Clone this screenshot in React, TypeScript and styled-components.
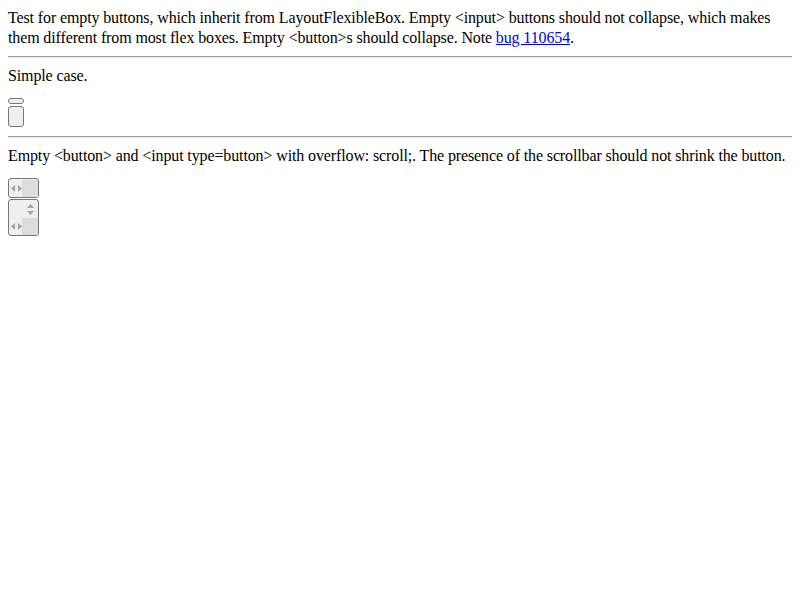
import React from 'react'
import styled, { createGlobalStyle } from 'styled-components'

const GlobalStyle = createGlobalStyle`
  body {
    margin: 8px;
    font-family: "Liberation Serif", "Times New Roman", serif;
    font-size: 16px;
    line-height: 20px;
    letter-spacing: -0.125px;
    color: #000;
    background: #fff;
  }
`

const Intro = styled.div``

const BugLink = styled.a`
  color: #0000ee;
  text-decoration: underline;
`

const Rule = styled.hr<{ $top?: number }>`
  margin: ${p => p.$top ?? 8}px 0 8px;
  height: 0;
  border: 0;
  border-top: 1px solid #9a9a9a;
  border-bottom: 1px solid #eeeeee;
`

const Para = styled.p`
  margin: 0;
`

const Case = styled.div`
  margin-top: 12px;
  display: flex;
  flex-direction: column;
  align-items: flex-start;
`

const FlatButton = styled.button<{ $h: number; $gap?: number }>`
  display: block;
  box-sizing: border-box;
  width: 16px;
  height: ${p => p.$h}px;
  margin: ${p => p.$gap ?? 0}px 0 0;
  padding: 0;
  border: 1px solid #767676;
  border-radius: 3px;
  background: #efefef;
`

const ScrollButton = styled.button<{ $gap?: number }>`
  display: flex;
  flex-direction: column;
  box-sizing: border-box;
  width: 31px;
  margin: ${p => p.$gap ?? 0}px 0 0;
  padding: 1px 0 0 1px;
  border: 1px solid #767676;
  border-radius: 3px;
  background: #efefef;
  overflow: hidden;
`

const BarRow = styled.span`
  display: flex;
  height: 17px;
`

const Track = styled.span`
  flex: 1;
  display: flex;
  align-items: center;
  padding-left: 1px;
  gap: 3px;
`

const VTrack = styled.span`
  flex: 1;
  display: flex;
  justify-content: flex-end;
`

const VBar = styled.span`
  width: 16px;
  display: flex;
  flex-direction: column;
  align-items: center;
  justify-content: center;
  gap: 3px;
`

const Corner = styled.span`
  width: 16px;
  background: #dcdcdc;
`

const Arrow = styled.svg`
  display: block;
  fill: #a3a3a3;
`

function Left() {
  return (
    <Arrow width='4' height='7' viewBox='0 0 4 7'>
      <path d='M4 0 L0 3.5 L4 7 Z' />
    </Arrow>
  )
}

function Right() {
  return (
    <Arrow width='4' height='7' viewBox='0 0 4 7'>
      <path d='M0 0 L4 3.5 L0 7 Z' />
    </Arrow>
  )
}

function Up() {
  return (
    <Arrow width='7' height='4' viewBox='0 0 7 4'>
      <path d='M0 4 L3.5 0 L7 4 Z' />
    </Arrow>
  )
}

function Down() {
  return (
    <Arrow width='7' height='4' viewBox='0 0 7 4'>
      <path d='M0 0 L3.5 4 L7 0 Z' />
    </Arrow>
  )
}

function HorizontalBar() {
  return (
    <BarRow>
      <Track>
        <Left />
        <Right />
      </Track>
      <Corner />
    </BarRow>
  )
}

export default function App() {
  return (
    <>
      <GlobalStyle />
      <Intro>
        Test for empty buttons, which inherit from LayoutFlexibleBox. Empty &lt;input&gt; buttons should not collapse,
        which makes them different from most flex boxes. Empty &lt;button&gt;s should collapse. Note{' '}
        <BugLink href='#'>bug 110654</BugLink>.
      </Intro>
      <Rule />
      <Para>Simple case.</Para>
      <Case>
        <FlatButton $h={6} />
        <FlatButton $h={21} $gap={2} />
      </Case>
      <Rule $top={9} />
      <Para>
        Empty &lt;button&gt; and &lt;input type=button&gt; with overflow: scroll;. The presence of the scrollbar should
        not shrink the button.
      </Para>
      <Case>
        <ScrollButton>
          <HorizontalBar />
        </ScrollButton>
        <ScrollButton $gap={1}>
          <BarRow>
            <VTrack>
              <VBar>
                <Up />
                <Down />
              </VBar>
            </VTrack>
          </BarRow>
          <HorizontalBar />
        </ScrollButton>
      </Case>
    </>
  )
}
